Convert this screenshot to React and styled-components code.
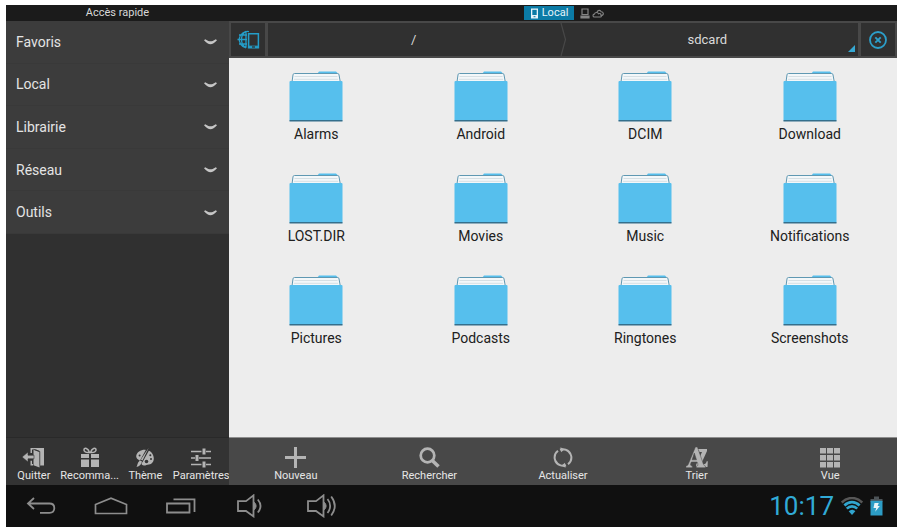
import React from "react";
import styled, { createGlobalStyle } from "styled-components";

const GlobalStyle = createGlobalStyle`
  * { box-sizing: border-box; }
  html, body, #root { height: 100%; }
  body { margin: 0; background: #fff; font-family: Roboto, "Liberation Sans", sans-serif; }
  button { font: inherit; color: inherit; background: none; border: 0; padding: 0; margin: 0; cursor: pointer; }
  svg { display: block; flex: none; }
`;

const Screen = styled.div`
  height: 100%;
  padding: 5px 3px 1px 6px;
  display: flex;
  flex-direction: column;
`;

const TopBar = styled.header`
  height: 16px;
  flex: none;
  display: flex;
  background: #1b1b1b;
  color: #d8d8d8;
  font-size: 11px;
  line-height: 16px;
`;

const TopTitle = styled.div`
  width: 223px;
  text-align: center;
`;

const Windows = styled.nav`
  flex: 1;
  display: flex;
  justify-content: center;
  padding: 1px 4px 1px 6px;
`;

const WindowTab = styled.button`
  display: flex;
  align-items: center;
  justify-content: center;
  gap: 3px;
  min-width: ${(p) => (p.$active ? "50px" : "13px")};
  margin-right: ${(p) => (p.$active ? "4px" : "0")};
  background: ${(p) => (p.$active ? "#0b7ba6" : "transparent")};
  color: ${(p) => (p.$active ? "#e6f4fa" : "#858585")};
  line-height: 14px;
`;

const Body = styled.div`
  flex: 1;
  min-height: 0;
  display: flex;
`;

const Sidebar = styled.aside`
  width: 223px;
  flex: none;
  display: flex;
  flex-direction: column;
  background: #303030;
`;

const Categories = styled.div`
  height: 213px;
  display: flex;
  flex-direction: column;
`;

const Category = styled.button`
  flex: 1;
  display: flex;
  align-items: center;
  justify-content: space-between;
  padding: 0 12px 0 10px;
  background: #3c3c3c;
  border-bottom: 1px solid #393939;
  color: #e4e4e4;
  font-size: 14px;
  line-height: 20px;
`;

const Main = styled.main`
  flex: 1;
  min-width: 0;
  display: flex;
  flex-direction: column;
  background: #ededed;
`;

const PathBar = styled.div`
  height: 37px;
  flex: none;
  display: flex;
  gap: 3px;
  padding: 2px;
  background: #484848;
`;

const PathButton = styled.button`
  width: 34px;
  display: grid;
  place-items: center;
  background: #303030;
`;

const Crumbs = styled.nav`
  flex: 1;
  display: flex;
  background: #303030;
`;

const Crumb = styled.button`
  flex: 1 1 0;
  display: flex;
  align-items: flex-end;
  color: #dadada;
  font-size: 13px;
  line-height: 33px;
`;

const CrumbText = styled.span`
  flex: 1;
  text-align: center;
`;

const CrumbCorner = styled.span`
  padding: 0 3px 4px 0;
`;

const Files = styled.div`
  flex: 1;
  display: grid;
  grid-template-columns: repeat(4, 1fr);
  grid-auto-rows: 102px;
  padding: 13px 5px 0;
`;

const File = styled.button`
  display: flex;
  flex-direction: column;
  align-items: center;
  gap: 2px;
  color: #202020;
  font-size: 14px;
  line-height: 20px;
`;

const Toolbar = styled.div`
  height: 48px;
  flex: none;
  display: flex;
  margin-top: auto;
  background: ${(p) => (p.$dark ? "#333" : "#484848")};
  border-top: 1px solid ${(p) => (p.$dark ? "#292929" : "#8e8e8e")};
`;

const Tool = styled.button`
  flex: 1 1 0;
  min-width: 0;
  display: flex;
  flex-direction: column;
  align-items: center;
  padding-top: 8px;
  color: #b4b4b4;
  white-space: nowrap;
`;

const ToolLabel = styled.span`
  color: #e6e6e6;
  font-size: 11px;
  line-height: 14px;
`;

const ToolIcon = styled.span`
  height: 23px;
  display: grid;
  place-items: center;
`;

const SystemBar = styled.footer`
  height: 42px;
  flex: none;
  display: flex;
  align-items: center;
  background: #101010;
`;

const SystemButton = styled.button`
  width: 70px;
  height: 42px;
  display: grid;
  place-items: center;
  color: #8d8d8d;
`;

const Status = styled.div`
  margin-left: auto;
  padding-right: 14px;
  display: flex;
  align-items: center;
  gap: 7px;
  color: #31aad6;
`;

const Clock = styled.time`
  font-size: 26px;
  line-height: 42px;
`;

const PhoneIcon = () => (
  <svg width="9" height="11" viewBox="0 0 9 11">
    <path d="M1 .5h7v10H1z" fill="#e6f4fa" />
    <path d="M2.3 1.8h4.4v5.2H2.3z" fill="#0b7ba6" />
    <path d="M3.5 8.2h2v1h-2z" fill="#0b7ba6" />
  </svg>
);

const ComputerIcon = () => (
  <svg width="10" height="11" viewBox="0 0 10 11" fill="none" stroke="currentColor" strokeWidth="1.2">
    <path d="M2 1h6v5.5H2z" />
    <path d="M1 8h8v2H1z" fill="currentColor" />
  </svg>
);

const CloudIcon = () => (
  <svg width="12" height="9" viewBox="0 0 12 9" fill="none" stroke="currentColor" strokeWidth="1.1">
    <path d="M2.5 8C.5 8 .5 5.3 2.4 5.1 3 3 6 3 6.5 4.8 8 4 9.5 5 8.8 6 9.8 6.4 9.5 8 8.5 8zM5 3.2C5.5.9 8.5.8 9.1 2.7 11.6 2.6 12.2 6 9.8 6.4" />
  </svg>
);

const Chevron = () => (
  <svg width="13" height="7" viewBox="0 0 13 7" fill="#c6c6c6">
    <path d="M0 2.3L1.2 1.2C4 2.8 5 3.3 6.5 3.3S9 2.8 11.8 1.2L13 2.3C10.5 4.9 8.5 6.2 6.5 6.2S2.5 4.9 0 2.3z" />
  </svg>
);

const GlobeDeviceIcon = () => (
  <svg width="24" height="20" viewBox="0 0 24 20" fill="none" stroke="#249dc8" strokeWidth="1.3">
    <path d="M13 1.6A8.2 8.2 0 1 0 10 17.8M10 1.3C4 5 4 14 10 17.8M10 1.3v16.5M1.5 9.5H11M3 5h8M3 14h8" />
    <path d="M12.6 3.7h9.8v14.1h-9.8z" strokeWidth="1.5" fill="#303030" />
    <path d="M12.6 16.3h9.8" />
    <path d="M16 17h3" stroke="#303030" />
  </svg>
);

const CloseIcon = () => (
  <svg width="20" height="20" viewBox="0 0 20 20" fill="none" stroke="#2c9fca">
    <circle cx="10" cy="10" r="8" strokeWidth="1.8" />
    <path d="M7.3 7.3l5.4 5.4M12.7 7.3l-5.4 5.4" strokeWidth="1.9" />
  </svg>
);

const CrumbArrow = () => (
  <svg width="7" height="33" viewBox="0 0 7 33" fill="none" stroke="#484848" strokeWidth="1.2">
    <path d="M1 0l4.5 16.5L1 33" />
  </svg>
);

const Triangle = () => (
  <svg width="7" height="7" viewBox="0 0 7 7">
    <path d="M7 0v7H0z" fill="#36a9d4" />
  </svg>
);

const FolderIcon = () => (
  <svg width="54" height="51" viewBox="0 0 54 51">
    <path d="M28 3l2-2.5h17l2.5 2.5v8H28z" fill="#56bfed" />
    <path d="M3 11l1-7.2q.2-1.3 1.5-1.3h43q1.3 0 1.5 1.3L51.3 11z" fill="#f3f7f9" />
    <path d="M3 11l1-7.2q.2-1.3 1.5-1.3h43q1.3 0 1.5 1.3L51.3 11" fill="none" stroke="#5f98b2" />
    <path d="M5.5 5.5h43M5 8.3h44" stroke="#d5dfe4" fill="none" />
    <path d="M1.5 10h51q1 0 1 1v38.5H.5V11q0-1 1-1z" fill="#56bfed" />
    <path d="M.5 49h53v1.6H.5z" fill="#346f8c" />
  </svg>
);

const QuitIcon = () => (
  <svg width="23" height="21" viewBox="0 0 23 21" fill="currentColor">
    <path d="M8.5 1H22v17.5h-4.5V4L14 2.5H10V6H8.5zM8.5 13.8H10V17h1v1.5H8.5z" />
    <path d="M11.5 2.7l6 2.3v15.5l-6-2.3z" />
    <path d="M11.5 2.3l6.3 2.2v14" stroke="#333" strokeWidth=".7" fill="none" />
    <path d="M0 10L6 5v3.2h6v3.6H6V15z" stroke="#333" strokeWidth=".6" />
  </svg>
);

const GiftIcon = () => (
  <svg width="20" height="21" viewBox="0 0 20 21" fill="currentColor">
    <path d="M1 7h8v4H1zM11 7h8v4h-8zM1 12.5h8V20H1zM11 12.5h8V20h-8z" />
    <path d="M9.5 5.5C6 6 3.5 4.4 4 2.5S8 .8 9.5 5.5zM10.5 5.5C14 6 16.5 4.4 16 2.5S12 .8 10.5 5.5z" fill="none" stroke="currentColor" strokeWidth="1.5" />
  </svg>
);

const PaletteIcon = () => (
  <svg width="20" height="21" viewBox="0 0 20 21">
    <path d="M1.2 9C2 2.5 12 .5 16.5 5.5c4.2 5 2.2 11.5-2.5 12-3 .3-3.5 1.5-6 .8-2-.6-1.5-3.8-3.5-4.8S1 11 1.2 9z" fill="currentColor" />
    <g fill="#333"><circle cx="4.6" cy="8.5" r="1" /><circle cx="15.3" cy="8.3" r="1" /><circle cx="16" cy="12" r="1" /><circle cx="11.5" cy="14.5" r="1.8" /></g>
    <path d="M13.6 1L6.5 14 2 20" stroke="#333" strokeWidth="3" fill="none" />
    <path d="M13.7 .8L7.5 13.5 5.9 12.6zM7 14.4c-.5 2.5-2.2 5-5.5 5.5 1.2-2 .8-4.8 3.6-6.5z" fill="currentColor" />
  </svg>
);

const SlidersIcon = () => (
  <svg width="20" height="20" viewBox="0 0 20 20" fill="none" stroke="currentColor">
    <path d="M0 3.5h10.5M15 3.5h5M0 10h4M8 10h12M0 16.5h10.5M15 16.5h5" strokeWidth="1.6" />
    <path d="M13 .5v6M6 7v6M13 13.5v6" strokeWidth="3" />
  </svg>
);

const PlusIcon = () => (
  <svg width="21" height="21" viewBox="0 0 21 21" stroke="currentColor" strokeWidth="3">
    <path d="M10.5 0v21M0 10.5h21" />
  </svg>
);

const SearchIcon = () => (
  <svg width="21" height="21" viewBox="0 0 21 21" fill="none" stroke="currentColor">
    <circle cx="8.5" cy="8.5" r="6.8" strokeWidth="2.7" />
    <path d="M13 13.3l6.5 6.2" strokeWidth="3.6" />
  </svg>
);

const RefreshIcon = () => (
  <svg width="20" height="21" viewBox="0 0 20 21" fill="none" stroke="currentColor" strokeWidth="2">
    <path d="M7.5 18.4A8.3 8.3 0 0 1 5 3.8M7 2.8A8.3 8.3 0 0 1 17.4 7M12.5 2.6A8.3 8.3 0 0 1 15 17.2M13 18.2A8.3 8.3 0 0 1 2.6 14" />
    <path d="M7.5 .2l4 2.4-3.5 2.6zM12.5 20.8l-4-2.4 3.5-2.6z" fill="currentColor" stroke="none" />
  </svg>
);

const SortIcon = () => (
  <svg width="22" height="22" viewBox="0 0 22 22" fill="currentColor">
    <path d="M11.5 2H21v2l-6 13.2h2.5c1.8 0 2.8-1 3.2-3h1.1L21.5 20H10v-2l6-13h-2.5z" />
    <path stroke="#484848" strokeWidth=".5" d="M9.4 0h2l6 17.2q.6 1.6 2 1.8v1.7h-9V19q2 0 1.5-2l-.7-2H5.4L4.6 17q-.4 2 1.7 2v1.7H-.2V19q1.9-.2 2.5-1.8zM8.3 6L6.1 12.8h4.4z" />
  </svg>
);

const GridIcon = () => (
  <svg width="20" height="20" viewBox="0 0 20 20" fill="currentColor">
    {[0, 7, 14].map((y) => [0, 7, 14].map((x) => <rect key={`${x}-${y}`} x={x} y={y} width="6" height="5.5" />))}
  </svg>
);

const BackIcon = () => (
  <svg width="30" height="18" viewBox="0 0 30 18" fill="none" stroke="currentColor" strokeWidth="1.8">
    <path d="M8 1L2 6.5 8 12M2 6.5h21.5c3.3 0 4.8 2 4.8 4.5s-1.5 4.8-4.8 4.8H14" />
  </svg>
);

const HomeIcon = () => (
  <svg width="34" height="18" viewBox="0 0 34 18" fill="none" stroke="currentColor" strokeWidth="1.7">
    <path d="M1.5 16.5V7.5L17 1.2l15.5 6.3v9z" />
  </svg>
);

const RecentIcon = () => (
  <svg width="32" height="16" viewBox="0 0 32 16" fill="none" stroke="currentColor" strokeWidth="1.8">
    <path d="M2 5.5h22.5v9H2zM8.5 1.3h21V14" />
  </svg>
);

const VolumeIcon = ({ loud }) => (
  <svg width="30" height="24" viewBox="0 0 30 24" fill="none" stroke="currentColor" strokeWidth="1.8">
    <path d="M2 7.2h8l7.5-5.8v21L10 17H2z" />
    <path d="M17.8 8c3 2 3 6 0 8z" fill="currentColor" strokeWidth="1" />
    <path d={loud ? "M21.5 5c3.5 4.2 3.5 9.8 0 14M25.2 2.5c4.5 6 4.5 13 0 19" : "M21.8 5.5c3.5 4.2 3.5 8.8 0 13"} />
  </svg>
);

const WifiIcon = () => (
  <svg width="22" height="19" viewBox="0 0 22 19" fill="none">
    <path d="M.8 5.5C7-.5 15-.5 21.2 5.5" stroke="#575757" strokeWidth="2.5" />
    <path d="M3.4 8.4C8 4 14 4 18.6 8.4M5.8 11.6c3-3 7.4-3 10.4 0" stroke="#31a5cf" strokeWidth="2.7" />
    <path d="M7.7 14.2c2-2 4.6-2 6.6 0L11 18z" fill="#31a5cf" />
  </svg>
);

const BatteryIcon = () => (
  <svg width="13" height="20" viewBox="0 0 13 20">
    <path d="M4 .5h5V3h3.5v3H.5V3H4z" fill="#4c5357" />
    <path d="M.5 4.8h12v14.7H.5z" fill="#2d9dc6" />
    <path d="M4.5 7h4.3L7.6 10h2.2L5.2 15.8 6.2 12H3.5z" fill="#e9f4f8" />
  </svg>
);

const categories = ["Favoris", "Local", "Librairie", "Réseau", "Outils"];
const folders = [
  "Alarms", "Android", "DCIM", "Download",
  "LOST.DIR", "Movies", "Music", "Notifications",
  "Pictures", "Podcasts", "Ringtones", "Screenshots",
];
const appTools = [
  ["Quitter", QuitIcon],
  ["Recomma...", GiftIcon],
  ["Thème", PaletteIcon],
  ["Paramètres", SlidersIcon],
];
const fileTools = [
  ["Nouveau", PlusIcon],
  ["Rechercher", SearchIcon],
  ["Actualiser", RefreshIcon],
  ["Trier", SortIcon],
  ["Vue", GridIcon],
];

function Tools({ items, dark }) {
  return (
    <Toolbar $dark={dark} role="toolbar">
      {items.map(([label, Icon]) => (
        <Tool key={label}>
          <ToolIcon><Icon /></ToolIcon>
          <ToolLabel>{label}</ToolLabel>
        </Tool>
      ))}
    </Toolbar>
  );
}

export default function App() {
  return (
    <>
      <GlobalStyle />
      <Screen>
        <TopBar>
          <TopTitle>Accès rapide</TopTitle>
          <Windows>
            <WindowTab $active><PhoneIcon />Local</WindowTab>
            <WindowTab aria-label="Réseau"><ComputerIcon /></WindowTab>
            <WindowTab aria-label="Cloud"><CloudIcon /></WindowTab>
          </Windows>
        </TopBar>
        <Body>
          <Sidebar>
            <Categories>
              {categories.map((name) => (
                <Category key={name}>{name}<Chevron /></Category>
              ))}
            </Categories>
            <Tools items={appTools} dark />
          </Sidebar>
          <Main>
            <PathBar>
              <PathButton aria-label="Stockage"><GlobeDeviceIcon /></PathButton>
              <Crumbs>
                <Crumb><CrumbText>/</CrumbText></Crumb>
                <CrumbArrow />
                <Crumb>
                  <CrumbText>sdcard</CrumbText>
                  <CrumbCorner><Triangle /></CrumbCorner>
                </Crumb>
              </Crumbs>
              <PathButton aria-label="Fermer"><CloseIcon /></PathButton>
            </PathBar>
            <Files>
              {folders.map((name) => (
                <File key={name}><FolderIcon />{name}</File>
              ))}
            </Files>
            <Tools items={fileTools} />
          </Main>
        </Body>
        <SystemBar>
          <SystemButton aria-label="Retour"><BackIcon /></SystemButton>
          <SystemButton aria-label="Accueil"><HomeIcon /></SystemButton>
          <SystemButton aria-label="Applications récentes"><RecentIcon /></SystemButton>
          <SystemButton aria-label="Baisser le volume"><VolumeIcon /></SystemButton>
          <SystemButton aria-label="Augmenter le volume"><VolumeIcon loud /></SystemButton>
          <Status>
            <Clock>10:17</Clock>
            <WifiIcon />
            <BatteryIcon />
          </Status>
        </SystemBar>
      </Screen>
    </>
  );
}
